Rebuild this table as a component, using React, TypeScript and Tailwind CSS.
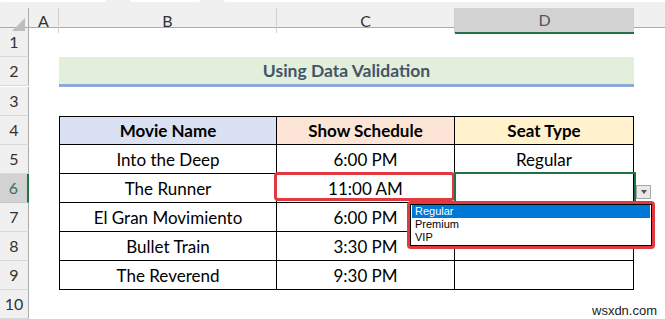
const rows = [
  { movie: 'Into the Deep', time: '6:00 PM', seat: 'Regular' },
  { movie: 'The Runner', time: '11:00 AM', seat: '' },
  { movie: 'El Gran Movimiento', time: '6:00 PM', seat: '' },
  { movie: 'Bullet Train', time: '3:30 PM', seat: '' },
  { movie: 'The Reverend', time: '9:30 PM', seat: '' },
]

const cols = 'grid grid-cols-[29px_30px_218px_178px_179px_1fr]'

function RowHead({ n, active }: { n: number; active?: boolean }) {
  return (
    <div
      className={
        active
          ? 'flex h-[29px] items-center justify-center border-r-2 border-b border-r-[#217346] border-b-[#c8c8c8] bg-[#d2d2d2] text-[16px] text-[#3f6e52]'
          : 'flex h-[29px] items-center justify-center border-r border-b border-r-[#ababab] border-b-[#dadada] bg-[#f0f0f0] text-[16px] text-[#333]'
      }
    >
      {n}
    </div>
  )
}

export default function App() {
  return (
    <div className="relative h-[319px] w-[665px] overflow-hidden bg-white font-['Lato',sans-serif] text-[17px] text-black">
      {/* ribbon remnants */}
      <div className="flex h-[8px] gap-[24px] bg-[#f0f0f0]">
        <div className="h-[2px] w-[106px] rounded-b bg-white" />
        <div className="h-[2px] w-[70px] rounded-b bg-white" />
        <div className="h-[2px] flex-1 rounded-bl bg-white" />
      </div>

      {/* column headers */}
      <div className={`${cols} h-[20px] border-b border-[#ababab] bg-[#f0f0f0] text-[16px] text-[#333]`}>
        <div className="relative border-r border-[#ababab]">
          <div className="absolute right-[3px] bottom-[2px] h-0 w-0 border-b-[13px] border-l-[13px] border-b-[#bdbdbd] border-l-transparent" />
        </div>
        <div className="flex items-center justify-center border-r border-[#cfcfcf]">A</div>
        <div className="flex items-center justify-center border-r border-[#cfcfcf]">B</div>
        <div className="flex items-center justify-center border-r border-[#cfcfcf]">C</div>
        <div className="-mb-px flex items-center justify-center border-b-2 border-[#217346] bg-[#d2d2d2] text-[#555]">D</div>
        <div />
      </div>

      <div className={cols}>
        {/* row 1 */}
        <RowHead n={1} />
        <div className="col-span-5" />

        {/* row 2: title */}
        <RowHead n={2} />
        <div />
        <div className="col-span-3 flex items-center justify-center border-b-[3px] border-[#8eaadb] bg-[#e2efda] pt-[1px] text-[17.5px] font-bold text-[#44546a]">
          Using Data Validation
        </div>
        <div />

        {/* row 3 */}
        <RowHead n={3} />
        <div className="col-span-5" />

        {/* row 4: table header */}
        <RowHead n={4} />
        <div />
        <div className="flex items-center justify-center border border-black bg-[#d9e1f2] font-bold">Movie Name</div>
        <div className="flex items-center justify-center border-y border-r border-black bg-[#fce4d6] font-bold">Show Schedule</div>
        <div className="flex items-center justify-center border-y border-r border-black bg-[#fff2cc] font-bold">Seat Type</div>
        <div />

        {rows.map((r, i) => (
          <div key={r.movie} className="contents">
            <RowHead n={i + 5} active={i === 1} />
            <div />
            <div className="flex items-center justify-center border-x border-b border-black">{r.movie}</div>
            <div className="flex items-center justify-center border-r border-b border-black">{r.time}</div>
            <div className="flex items-center justify-center border-r border-b border-black">{r.seat}</div>
            <div />
          </div>
        ))}

        <RowHead n={10} />
        <div className="col-span-5" />
      </div>

      {/* highlight around C6 */}
      <div className="absolute top-[172px] left-[274px] h-[29px] w-[181px] rounded-[4px] border-[3px] border-[#e0393f]" />

      {/* active cell D6 */}
      <div className="absolute top-[172px] left-[454px] h-[30px] w-[182px] border-2 border-b-0 border-[#217346]" />

      {/* dropdown arrow button */}
      <div className="absolute top-[185px] left-[636px] flex h-[14px] w-[15px] items-center justify-center border border-[#a8a8a8] bg-[#e9e9e9]">
        <div className="h-0 w-0 border-x-[3.5px] border-t-[4px] border-x-transparent border-t-[#555]" />
      </div>

      {/* dropdown list */}
      <div className="absolute top-[201px] left-[407px] h-[48px] w-[248px] rounded-[4px] border-[3px] border-[#e0393f] bg-white">
        <div className="h-full w-full border border-black bg-white font-['Liberation_Sans',sans-serif] text-[11px]">
          <div className="mx-[1px] h-[13px] bg-[#0078d7] pl-[3px] leading-[13px] text-white">Regular</div>
          <div className="h-[13px] pl-[4px] leading-[13px]">Premium</div>
          <div className="h-[13px] pl-[4px] leading-[13px]">VIP</div>
        </div>
      </div>

      {/* watermark */}
      <div className="absolute top-[301px] left-[592px] font-['Liberation_Sans',sans-serif] text-[13px] text-[#222]">
        wsxdn.com
      </div>
    </div>
  )
}
